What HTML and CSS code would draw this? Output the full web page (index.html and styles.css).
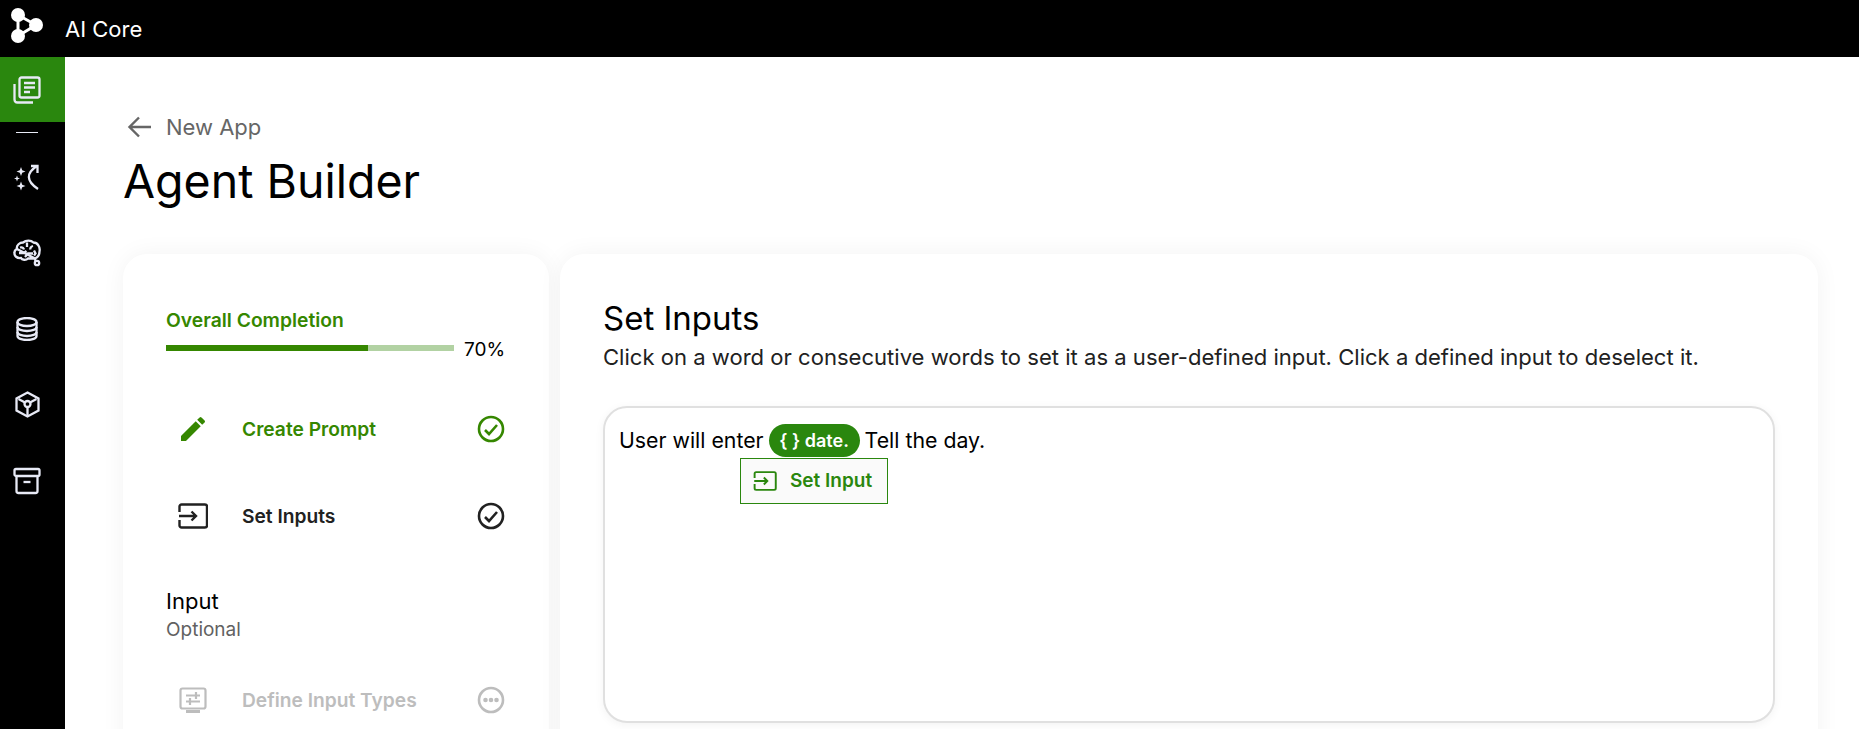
FILE: index.html
```html
<!DOCTYPE html>
<html lang="en">
<head>
    <meta charset="UTF-8">
    <meta name="viewport" content="width=device-width, initial-scale=1.0">
    <title>Agent Builder</title>
    <link rel="stylesheet" href="styles.css">
</head>
<body>
    <header class="topbar">
        <svg class="logo" width="36" height="42" viewBox="0 0 36 42" fill="#fff" stroke="#fff">
            <path d="M7 7V28M7 28L25 17M7 7L25 17" stroke-width="3" fill="none"/>
            <circle cx="7" cy="7" r="7" stroke="none"/>
            <circle cx="7" cy="28" r="7" stroke="none"/>
            <circle cx="25" cy="17" r="7" stroke="none"/>
        </svg>
        <span class="brand">AI Core</span>
    </header>
    <div class="layout">
        <nav class="sidebar">
            <a class="nav-item active">
                <svg width="28" height="28" viewBox="0 0 28 28" fill="none" stroke="#e8eaf6" stroke-width="2.300">
                    <path d="M1.500 8V23.500C1.500 25.500 2.500 26.500 4.500 26.500H20"/>
                    <rect x="6.500" y="1.500" width="20" height="20" rx="2"/>
                    <path d="M11 7H22M11 11.500H22M11 16H17"/>
                </svg>
            </a>
            <div class="nav-divider"></div>
            <a class="nav-item">
                <svg width="28" height="28" viewBox="0 0 28 28" fill="none" stroke="#e8eaf6" stroke-width="2.300">
                    <path d="M24 3C13 10 13 18 25 26"/>
                    <path d="M18 3H24.500V10"/>
                    <path d="M8 4L9.200 7.300L12.500 8.500L9.200 9.700L8 13L6.800 9.700L3.500 8.500L6.800 7.300Z" fill="#e8eaf6" stroke="none"/>
                    <path d="M8 18.500L9.200 21.800L12.500 23L9.200 24.200L8 27.500L6.800 24.200L3.500 23L6.800 21.800Z" fill="#e8eaf6" stroke="none"/>
                    <path d="M4 12.500L4.800 14.700L7 15.500L4.800 16.300L4 18.500L3.200 16.300L1 15.500L3.200 14.700Z" fill="#e8eaf6" stroke="none"/>
                </svg>
            </a>
            <a class="nav-item">
                <svg width="28" height="28" viewBox="0 0 28 28" fill="none" stroke="#e8eaf6" stroke-width="2.300">
                    <path d="M4 10C3 6 7 3.500 10 3.500C13 1 18 1 20.500 3.500C24.500 3.500 27.500 8 26.500 12.500C26.500 16 24.500 18.500 22 19.500L22.500 22M22 19.500H15C13 21.500 9 21 8 19C4 19.500 1 17 1.500 13.500C1.500 12 2.500 10.500 4 10Z"/>
                    <circle cx="24" cy="24" r="2.200"/>
                    <path d="M7 8.500C9 8 10.500 9 11 10.500M14 3.500V8M20 7C18 7.500 17 9 17.500 10.500M6 14H11L13.500 12M12 18L15 14.500H20M21 11.500L22.500 14.500L21 16.500"/>
                </svg>
            </a>
            <a class="nav-item">
                <svg width="22" height="24" viewBox="0 0 22 24" fill="none" stroke="#e8eaf6" stroke-width="2.300">
                    <ellipse cx="11" cy="5" rx="9.500" ry="4"/>
                    <path d="M1.500 5V19C1.500 21.500 6 23 11 23C16 23 20.500 21.500 20.500 19V5"/>
                    <path d="M1.500 10C1.500 12.500 6 14 11 14C16 14 20.500 12.500 20.500 10"/>
                    <path d="M1.500 15C1.500 17.500 6 19 11 19C16 19 20.500 17.500 20.500 15"/>
                </svg>
            </a>
            <a class="nav-item hex-item">
                <svg width="25" height="27" viewBox="0 0 25 27" fill="none" stroke="#e8eaf6" stroke-width="2.300">
                    <path d="M12.500 1.500L23.500 7.500V19.500L12.500 25.500L1.500 19.500V7.500Z"/>
                    <circle cx="12.500" cy="13" r="3"/>
                    <path d="M3.500 8L10 11.500M21.500 8L15 11.500M12.500 16V25"/>
                </svg>
            </a>
            <a class="nav-item">
                <svg width="28" height="28" viewBox="0 0 28 28" fill="none" stroke="#e8eaf6" stroke-width="2.300">
                    <rect x="1.500" y="2" width="25" height="7" rx="1.500"/>
                    <path d="M3.500 9V24C3.500 25.500 4.500 26 5.500 26H22.500C23.500 26 24.500 25.500 24.500 24V9"/>
                    <path d="M10.500 15H17.500"/>
                </svg>
            </a>
        </nav>
        <main class="content">
            <div class="back-row">
                <svg width="24" height="24" viewBox="0 0 24 24" fill="none" stroke="#666" stroke-width="2.400">
                    <path d="M3 12H24M12 2.500L2.500 12L12 21.500"/>
                </svg>
                <span>New App</span>
            </div>
            <h1>Agent Builder</h1>
            <div class="cards">
                <aside class="card steps">
                    <div class="completion-label">Overall Completion</div>
                    <div class="completion-row">
                        <div class="bar"><div class="bar-fill" style="width: 70%"></div></div>
                        <span class="percent">70%</span>
                    </div>
                    <div class="step step-done">
                        <span class="step-icon">
                            <svg width="32" height="32" viewBox="0 0 24 24" fill="#358700"><path d="M3 17.250V21h3.750L17.810 9.940l-3.750-3.750L3 17.250zM20.710 7.040a1 1 0 0 0 0-1.410l-2.340-2.340a1 1 0 0 0-1.410 0l-1.830 1.830 3.750 3.750 1.830-1.830z"/></svg>
                        </span>
                        <span class="step-name">Create Prompt</span>
                        <svg class="step-state" width="28" height="28" viewBox="0 0 28 28" fill="none" stroke="#358700" stroke-width="2.600"><circle cx="14" cy="14" r="12"/><path d="M8 15L12 19L20 10"/></svg>
                    </div>
                    <div class="step step-current">
                        <span class="step-icon">
                            <svg width="30" height="26" viewBox="0 0 30 26" fill="none" stroke="#212121" stroke-width="2.400"><path d="M1.500 9V3.500C1.500 2.500 2.500 1.500 3.500 1.500H27C28 1.500 29 2.500 29 3.500V22.500C29 23.500 28 24.500 27 24.500H3.500C2.500 24.500 1.500 23.500 1.500 22.500V17"/><path d="M1 13H18M13.500 8.500L18 13L13.500 17.500"/></svg>
                        </span>
                        <span class="step-name">Set Inputs</span>
                        <svg class="step-state" width="28" height="28" viewBox="0 0 28 28" fill="none" stroke="#212121" stroke-width="2.600"><circle cx="14" cy="14" r="12"/><path d="M8 15L12 19L20 10"/></svg>
                    </div>
                    <div class="section-title">Input</div>
                    <div class="section-sub">Optional</div>
                    <div class="step step-todo">
                        <span class="step-icon">
                            <svg width="28" height="26" viewBox="0 0 28 26" fill="none" stroke="#bdbdbd" stroke-width="2.200"><rect x="1.500" y="1.500" width="25" height="20" rx="2"/><path d="M7 24.500H21" stroke-width="3"/><path d="M7 8.500H21M17 5V12M21 14.500H7M11 11V18"/></svg>
                        </span>
                        <span class="step-name">Define Input Types</span>
                        <svg class="step-state" width="28" height="28" viewBox="0 0 28 28" fill="none" stroke="#bdbdbd" stroke-width="2.600"><circle cx="14" cy="14" r="12"/><circle cx="8.500" cy="14" r="1" fill="#bdbdbd"/><circle cx="14" cy="14" r="1" fill="#bdbdbd"/><circle cx="19.500" cy="14" r="1" fill="#bdbdbd"/></svg>
                    </div>
                </aside>
                <section class="card panel">
                    <h2>Set Inputs</h2>
                    <p class="panel-help">Click on a word or consecutive words to set it as a user-defined input. Click a defined input to deselect it.</p>
                    <div class="editor">
                        <span>User will enter</span>
                        <span class="chip">{ } date.</span>
                        <span>Tell the day.</span>
                        <button class="set-input">
                            <svg width="26" height="20" viewBox="0 0 30 26" fill="none" stroke="#2a870e" stroke-width="2.500"><path d="M1.500 9V3.500C1.500 2.500 2.500 1.500 3.500 1.500H27C28 1.500 29 2.500 29 3.500V22.500C29 23.500 28 24.500 27 24.500H3.500C2.500 24.500 1.500 23.500 1.500 22.500V17"/><path d="M1 13H18M13.500 8.500L18 13L13.500 17.500"/></svg>
                            Set Input
                        </button>
                    </div>
                </section>
            </div>
        </main>
    </div>
</body>
</html>
```
FILE: styles.css
```css
* {
    box-sizing: border-box;
}

html, body {
    height: 100%;
}

body {
    margin: 0;
    overflow: hidden;
    font-family: Inter, "Noto Sans", sans-serif;
    color: #000;
    background-color: #fff;
}

.topbar {
    display: flex;
    align-items: center;
    height: 57px;
    padding-left: 11px;
    background-color: #000;
}

.logo {
    margin-right: 18px;
}

.brand {
    color: #fff;
    font-size: 22px;
}

.layout {
    display: flex;
    height: 672px;
}

.sidebar {
    flex: 0 0 65px;
    display: flex;
    flex-direction: column;
    align-items: center;
    background-color: #000;
}

.nav-item {
    display: flex;
    align-items: center;
    justify-content: center;
    width: 100%;
    height: 76px;
    padding-right: 11px;
}

.nav-item.active {
    height: 65px;
    background-color: #2a870e;
}

.hex-item {
    padding-bottom: 2px;
}

.nav-divider {
    width: 22px;
    height: 1px;
    margin-top: 10px;
    margin-bottom: 6px;
    margin-right: 11px;
    background-color: #e8eaf6;
}

.content {
    flex: 1;
    padding: 58px 41px 0 58px;
}

.back-row {
    display: flex;
    align-items: center;
    gap: 15px;
    height: 24px;
    color: #666;
    font-size: 22px;
}

.back-row svg {
    margin-left: 4px;
}

h1 {
    margin: 12px 0 0;
    font-size: 46.500px;
    font-weight: 400;
    line-height: 60px;
}

.cards {
    display: flex;
    gap: 11px;
    margin-top: 43px;
}

.card {
    height: 560px;
    border-radius: 24px;
    background-color: #fff;
    box-shadow: 0 0 24px rgba(0, 0, 0, 0.05);
}

.steps {
    flex: 0 0 426px;
    padding: 55px 43px 0;
}

.completion-label {
    color: #358700;
    font-size: 19.300px;
    font-weight: 600;
    line-height: 22px;
}

.completion-row {
    display: flex;
    align-items: center;
    gap: 10px;
    margin-top: 6px;
    height: 24px;
    font-size: 19px;
    white-space: nowrap;
}

.bar {
    flex: 0 0 288px;
    height: 6px;
    margin-top: -2px;
    background-color: #b2d2a3;
}

.bar-fill {
    height: 100%;
    background-color: #358700;
}

.step {
    display: flex;
    align-items: center;
    height: 34px;
    font-size: 19.200px;
    font-weight: 600;
}

.step-icon {
    display: flex;
    justify-content: center;
    width: 54px;
    margin-right: 22px;
}

.step-name {
    flex: 1;
}

.step-state {
    margin-right: 1px;
}

.step-done {
    margin-top: 51px;
    color: #358700;
}

.step-current {
    margin-top: 53px;
    color: #212121;
}

.step-todo {
    margin-top: 42px;
    color: #bdbdbd;
}

.section-title {
    margin-top: 55px;
    font-size: 22px;
    line-height: 26px;
}

.section-sub {
    margin-top: 5px;
    color: #616161;
    font-size: 19px;
    line-height: 22px;
}

.panel {
    flex: 1;
    padding: 46px 43px 0;
}

h2 {
    margin: 0;
    font-size: 33px;
    font-weight: 400;
    line-height: 36px;
}

.panel-help {
    margin: 8px 0 0;
    color: #212121;
    font-size: 22.070px;
    line-height: 26px;
}

.editor {
    position: relative;
    display: flex;
    align-items: flex-start;
    gap: 5px;
    height: 317px;
    margin-top: 36px;
    padding: 16px 14px;
    border: 2px solid #e0e0e0;
    border-radius: 24px;
    background-color: #fff;
    box-shadow: 0 2px 10px rgba(0, 0, 0, 0.05);
    font-size: 21.300px;
    line-height: 33px;
}

.chip {
    flex: 0 0 91px;
    height: 33px;
    border-radius: 17px;
    background-color: #2a870e;
    color: #fff;
    font-size: 18px;
    font-weight: 600;
    line-height: 33px;
    text-align: center;
}

.set-input {
    position: absolute;
    left: 135px;
    top: 50px;
    display: flex;
    align-items: center;
    gap: 12px;
    width: 148px;
    height: 46px;
    padding: 0 11px 1px;
    border: 1px solid #2a870e;
    background-color: #fafafa;
    color: #2a870e;
    font-family: inherit;
    font-size: 19px;
    font-weight: 600;
}
```
